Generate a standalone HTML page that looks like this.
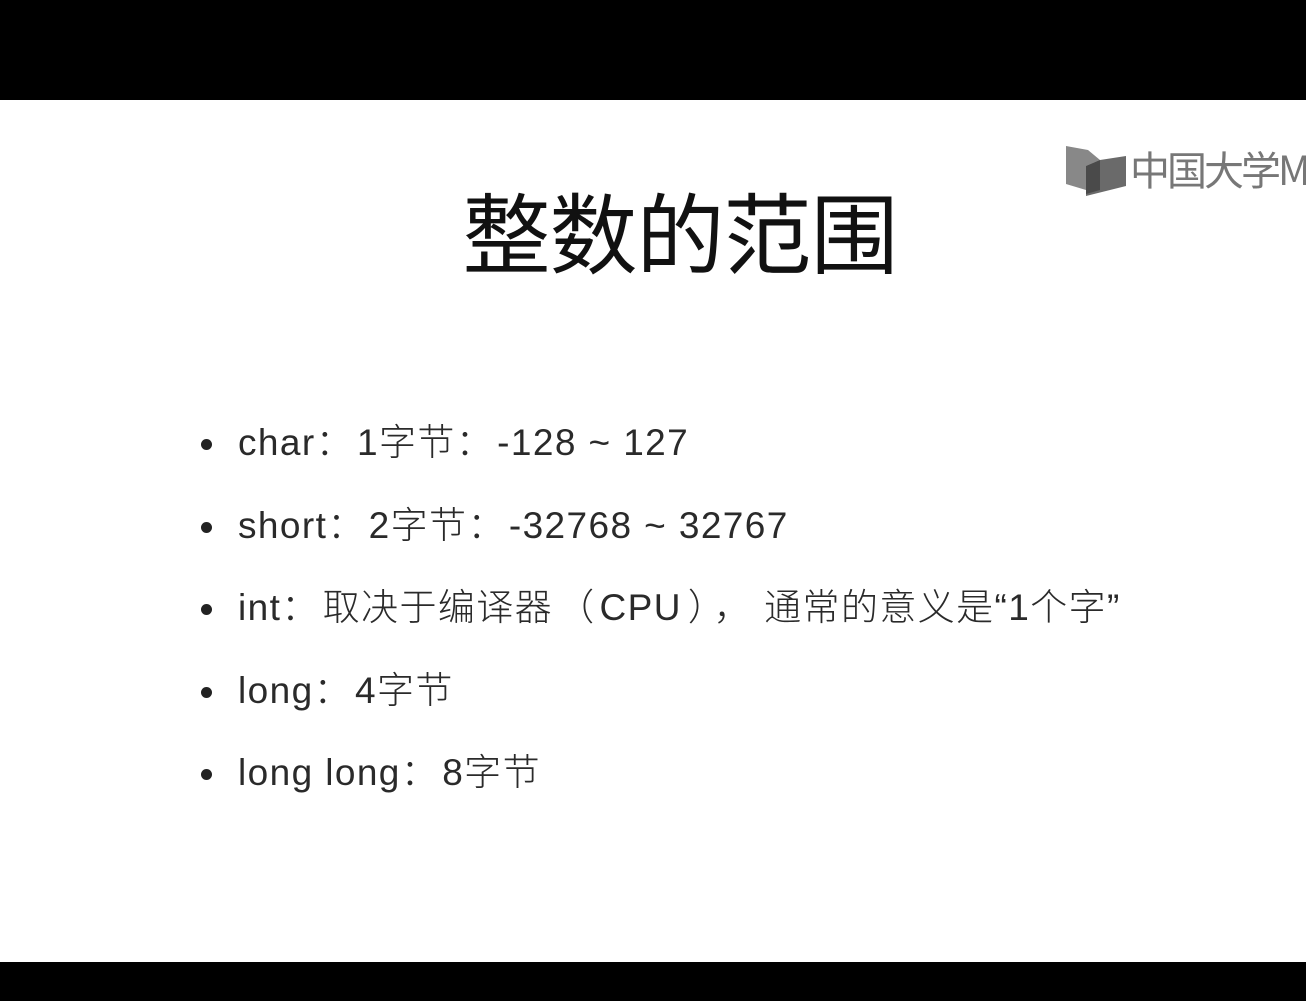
<!DOCTYPE html>
<html><head><meta charset="utf-8"><style>
body{margin:0;width:1306px;height:1001px;background:#000;overflow:hidden;font-family:"Liberation Sans","Noto Sans CJK SC",sans-serif;}
.slide{position:absolute;left:0;top:100px;width:1306px;height:862px;background:#fff;}
.title{position:absolute;left:0;width:1306px;top:80px;text-align:center;font-size:88px;line-height:100px;color:#111;font-family:"Noto Sans CJK SC",sans-serif;font-weight:400;letter-spacing:-1px;padding-left:54px;box-sizing:border-box}
.li{position:absolute;left:238px;font-size:37px;line-height:44px;color:#2a2a2a;white-space:nowrap;font-weight:300;letter-spacing:1.4px}
.li:before{content:"";position:absolute;left:-37px;top:18px;width:11px;height:11px;border-radius:50%;background:#222}
.c{margin:0 3px 0 0}
.logo{position:absolute;left:1066px;top:44px;}
.logo span{position:absolute;left:64px;top:2px;font-size:40px;line-height:44px;color:#777;font-family:"Noto Sans CJK SC",sans-serif;white-space:nowrap;letter-spacing:-3px}
</style></head><body>
<div class="slide">
<div class="logo"><svg width="66" height="52" viewBox="0 0 66 52"><polygon points="0,2 22,6 34,16 20,22 20,46 0,40" fill="#888"/><polygon points="20,22 34,16 60,12 60,42 20,52" fill="#6a6a6a"/><polygon points="20,22 34,16 34,46 20,50" fill="#4a4a4a"/></svg><span>中国大学M</span></div>
<div class="title">整数的范围</div>
<div class="li" style="top:321px">char<span class="c">：</span>1字节<span class="c">：</span>-128 ~ 127</div>
<div class="li" style="top:404px">short<span class="c">：</span>2字节<span class="c">：</span>-32768 ~ 32767</div>
<div class="li" style="top:486px">int<span class="c">：</span>取决于编译器<span style="margin:0 4px">（</span>CPU<span style="margin:0 6px">）</span>，<span style="margin-left:12px"></span>通常的意义是“1个字”</div>
<div class="li" style="top:569px">long<span class="c">：</span>4字节</div>
<div class="li" style="top:651px">long long<span class="c">：</span>8字节</div>
</div>
</body></html>
